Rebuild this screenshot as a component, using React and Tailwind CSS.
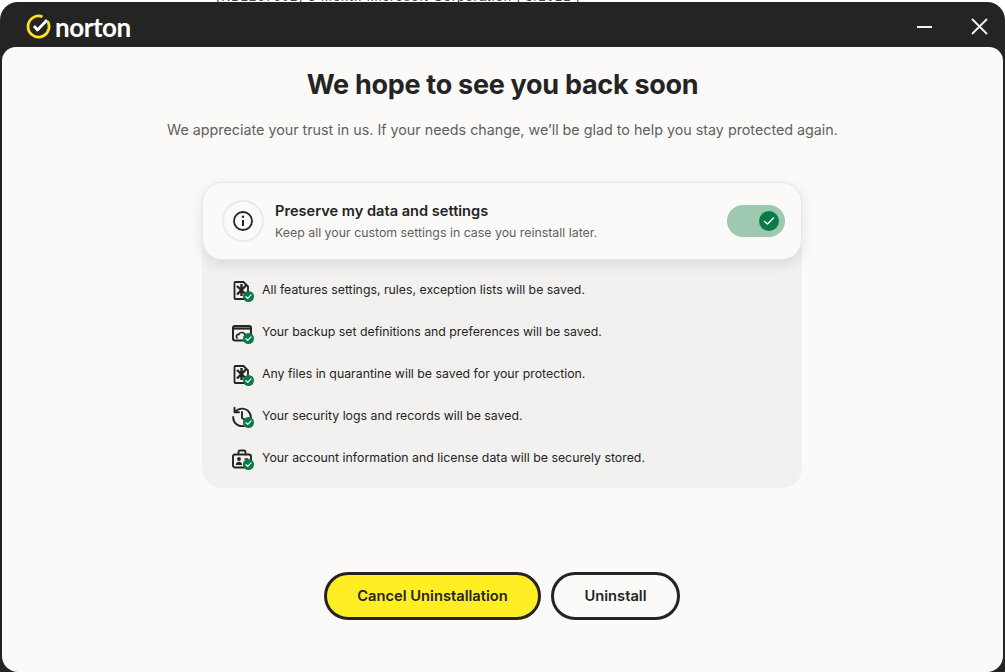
import React from 'react';

function CheckBadge() {
  return (
    <svg className="absolute left-[11px] top-[12px]" width="11" height="11" viewBox="0 0 12 12" fill="none">
      <circle cx="6" cy="6" r="6" fill="#0b7a47" />
      <path d="M3.2 6.2 5.2 8 8.8 4.3" stroke="#fff" strokeWidth="1.3" strokeLinecap="round" strokeLinejoin="round" />
    </svg>
  );
}

function FileIcon() {
  return (
    <svg width="20" height="22" viewBox="0 0 20 22" fill="none" stroke="#242424" strokeWidth="1.8">
      <path d="M3.5 3h8l4.5 4.5V20H3.5a1 1 0 0 1-1-1V4a1 1 0 0 1 1-1Z" strokeLinejoin="round" />
      <path d="M5 7 14 15.5M14 6.5 5 15.5M9.5 5V17" strokeWidth="2.4" />
    </svg>
  );
}

function BackupIcon() {
  return (
    <svg width="20" height="22" viewBox="0 0 20 22" fill="none" stroke="#242424" strokeWidth="2">
      <rect x="1" y="5" width="18" height="14.5" rx="2" />
      <path d="M1 7.5h18" strokeWidth="2.2" />
      <path d="M5 17c-1.500-2.200.2-4 1.800-3.600C7.800 11 11.500 10.800 12.800 13.400c1 0 1.700.4 2.200 1" strokeWidth="1.7" strokeLinecap="round" />
    </svg>
  );
}

function HistoryIcon() {
  return (
    <svg width="20" height="22" viewBox="0 0 20 22" fill="none" stroke="#242424" strokeWidth="1.9" strokeLinecap="round" strokeLinejoin="round">
      <path d="M3.200 6.800A8.800 8.800 0 1 1 1.200 12" />
      <path d="M2.500 2.800v4.500h4.500" />
      <path d="M10 7v6l2.500 1.500" />
    </svg>
  );
}

function BriefcaseIcon() {
  return (
    <svg width="20" height="22" viewBox="0 0 20 22" fill="none" stroke="#242424" strokeWidth="1.9">
      <rect x="1" y="7.5" width="18" height="13" rx="2" />
      <path d="M6.500 7.500V5a1.500 1.500 0 0 1 1.500-1.500h4A1.500 1.500 0 0 1 13.500 5v2.500" />
      <circle cx="7" cy="12" r="1.9" fill="#242424" stroke="none" />
      <path d="M3.800 18c.2-2 1.500-3.200 3.200-3.200s3 1.200 3.200 3.200Z" fill="#242424" stroke="none" />
      <path d="M12.500 12H16" strokeWidth="1.5" />
    </svg>
  );
}

const rows = [
  { Icon: FileIcon, text: 'All features settings, rules, exception lists will be saved.' },
  { Icon: BackupIcon, text: 'Your backup set definitions and preferences will be saved.' },
  { Icon: FileIcon, text: 'Any files in quarantine will be saved for your protection.' },
  { Icon: HistoryIcon, text: 'Your security logs and records will be saved.' },
  { Icon: BriefcaseIcon, text: 'Your account information and license data will be securely stored.' },
];

export default function App() {
  return (
    <div className="w-[1005px] h-[672px] overflow-hidden bg-white font-['Inter',sans-serif]">
      {/* Sliver of the window behind */}
      <div className="h-[2px] overflow-hidden pl-[155px]">
        <div className="h-[2px] border-l border-[#d8d8d8] pl-[60px]">
          <div className="-mt-[11px] text-[13px] leading-[16px] tracking-[1px] whitespace-nowrap text-[#444444] font-['Liberation_Sans',sans-serif]">(KB2267602) 5 Month Microsoft Corporation | 5/2021 |</div>
        </div>
      </div>
      <div className="h-[670px] bg-[#242424] rounded-t-[18px] flex flex-col px-[2px]">
        {/* Title bar */}
        <div className="h-[45px] shrink-0 flex items-center justify-between pt-[4px] pl-[24px] pr-[15px]">
          <div className="flex items-center gap-[4px]">
            <svg width="25" height="25" viewBox="0 0 25 25" fill="none">
              <path d="M21.600 7.200A10.500 10.500 0 1 1 16.500 2.800" stroke="#ffe01b" strokeWidth="2.8" />
              <path d="M8 12 11.500 16 21 6" stroke="#fff" strokeWidth="2.8" strokeLinejoin="round" />
            </svg>
            <span className="text-[26px] leading-none font-bold text-white tracking-[-0.45px] font-['Lato',sans-serif]">norton</span>
          </div>
          <div className="flex items-center gap-[39px]">
            <div className="w-[15px] h-[2px] bg-[#f2f2f2]" />
            <svg width="17" height="17" viewBox="0 0 17 17" stroke="#f2f2f2" strokeWidth="1.8">
              <path d="M1 1 16 16M16 1 1 16" />
            </svg>
          </div>
        </div>

        {/* Content */}
        <div className="flex-1 bg-[#fbfaf8] rounded-t-[14px] rounded-b-[16px] flex flex-col items-center pt-[20px]">
          <h1 className="text-[27px] leading-[36px] font-bold text-[#242424] tracking-[-0.29px]">We hope to see you back soon</h1>
          <p className="mt-[15px] text-[14.3px] leading-[24px] text-[#5f5f5f]">We appreciate your trust in us. If your needs change, we’ll be glad to help you stay protected again.</p>

          <div className="mt-[40px] w-[600px] mr-[1px] bg-[#f2f1ef] rounded-[20px]">
            <div className="h-[78px] bg-[#fbfaf8] border border-[#e8e7e5] rounded-[20px] shadow-[0_4px_14px_rgba(0,0,0,0.1)] flex items-center pl-[19px] pr-[16px]">
              <div className="w-[42px] h-[42px] rounded-full border-2 border-[#ebeae8] flex items-center justify-center">
                <svg width="22" height="22" viewBox="0 0 22 22" fill="none" stroke="#242424" strokeWidth="1.8">
                  <circle cx="11" cy="11" r="9" />
                  <path d="M11 10v6" strokeWidth="2" />
                  <circle cx="11" cy="6.8" r="1.2" fill="#242424" stroke="none" />
                </svg>
              </div>
              <div className="ml-[11px] flex-1 pt-[2px]">
                <div className="text-[14.6px] leading-[20px] font-semibold text-[#242424]">Preserve my data and settings</div>
                <div className="mt-[2px] text-[12.35px] leading-[20px] text-[#5f5f5f]">Keep all your custom settings in case you reinstall later.</div>
              </div>
              <div className="w-[58px] h-[32px] rounded-full bg-[#9dc9b1] flex items-center justify-end pr-[6px]">
                <svg width="20" height="20" viewBox="0 0 20 20" fill="none">
                  <circle cx="10" cy="10" r="10" fill="#0b7a47" />
                  <path d="M5.500 10.500 8.500 13 14.500 7" stroke="#fff" strokeWidth="1.4" strokeLinecap="round" strokeLinejoin="round" />
                </svg>
              </div>
            </div>
            <div className="pt-[9px] pb-[9px] pl-[30px] flex flex-col">
              {rows.map((row) => (
                <div key={row.text} className="h-[42px] flex items-center gap-[10px]">
                  <div className="relative w-[20px] h-[22px] shrink-0">
                    <row.Icon />
                    <CheckBadge />
                  </div>
                  <span className="text-[12.32px] leading-[20px] text-[#242424]">{row.text}</span>
                </div>
              ))}
            </div>
          </div>

          <div className="mt-[84px] mr-[1px] flex gap-[10px]">
            <button className="w-[217px] h-[48px] rounded-full border-[3px] border-[#242424] bg-[#ffee24] text-[14.7px] font-semibold text-[#242424]">Cancel Uninstallation</button>
            <button className="w-[129px] h-[48px] rounded-full border-[3px] border-[#242424] bg-[#fbfaf8] text-[14.7px] font-semibold text-[#242424]">Uninstall</button>
          </div>
        </div>
      </div>
    </div>
  );
}
